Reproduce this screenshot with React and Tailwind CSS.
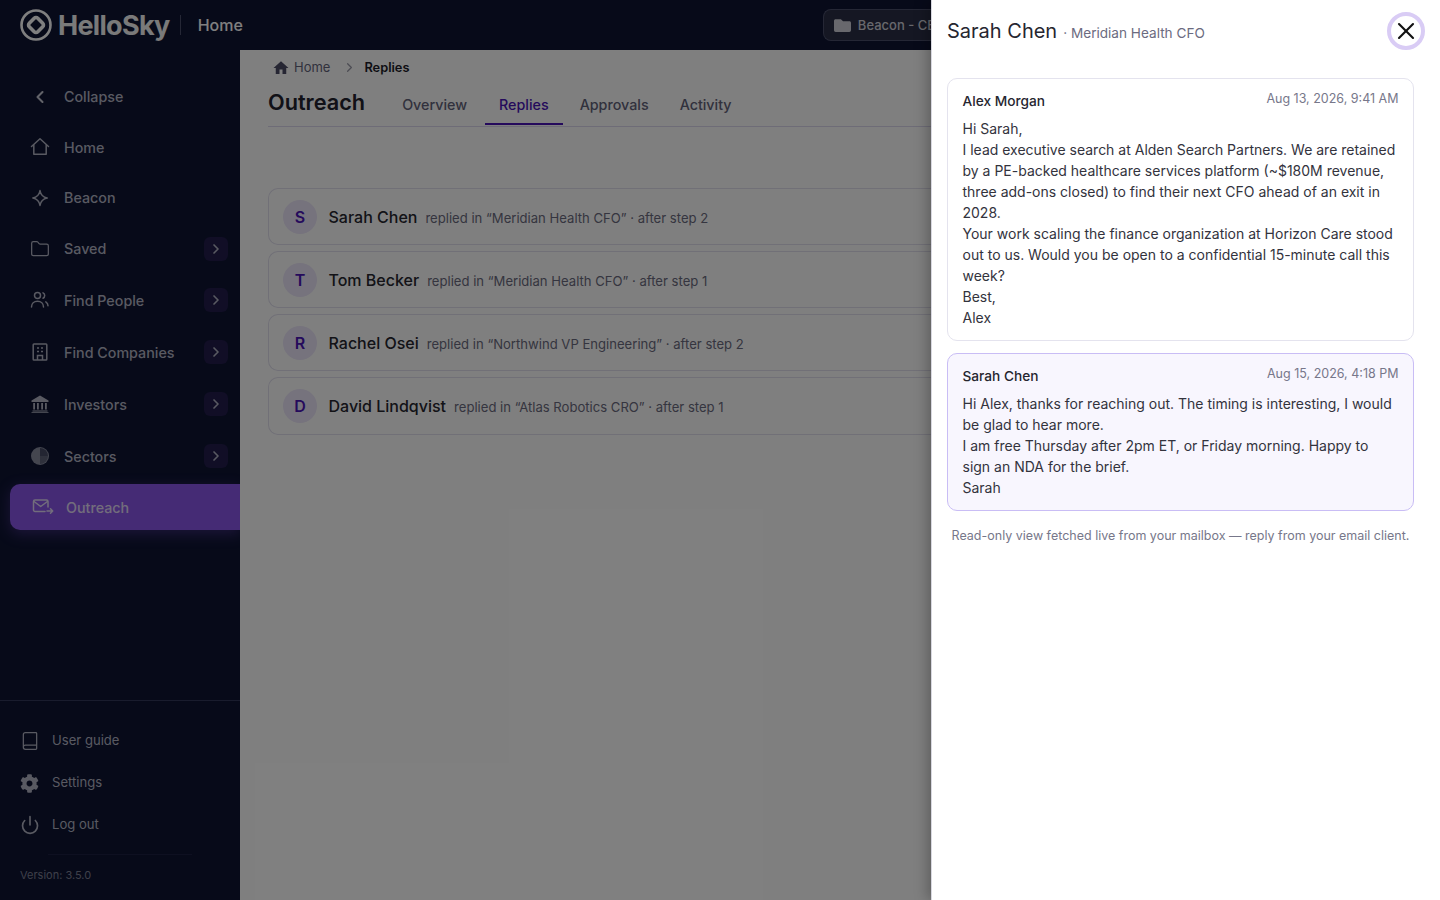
import { Book, ChevronLeft, ChevronRight, Folder, Power, X } from "lucide-react";
import { FaCog, FaFolder } from "react-icons/fa";
import { MdHome } from "react-icons/md";

const font = { fontFamily: "Inter, 'Noto Sans', sans-serif" };

function HomeIcon() {
  return (
    <svg width="20" height="20" viewBox="0 0 20 20" fill="none" stroke="currentColor" strokeWidth="1.500" strokeLinejoin="round" strokeLinecap="round">
      <path d="M1.500 9.500L10 1.800l8.500 7.700" />
      <path d="M3.800 8v9.200h12.400V8" />
    </svg>
  );
}

function Sparkle() {
  return (
    <svg width="20" height="20" viewBox="0 0 20 20" fill="none" stroke="currentColor" strokeWidth="1.500" strokeLinejoin="round">
      <path d="M10 2.500c.7 4.400 2.700 6.700 7.200 7.500-4.500.8-6.500 3.100-7.200 7.500-.7-4.400-2.700-6.700-7.200-7.500 4.500-.8 6.500-3.100 7.200-7.500z" />
    </svg>
  );
}

function PeopleIcon() {
  return (
    <svg width="20" height="20" viewBox="0 0 20 20" fill="none" stroke="currentColor" strokeWidth="1.500" strokeLinecap="round">
      <circle cx="7.500" cy="5.500" r="3" />
      <path d="M1.500 17c0-3.600 2.600-5.800 6-5.800s6 2.200 6 5.800" />
      <path d="M13 2.800a3 3 0 0 1 0 5.400" />
      <path d="M15.800 11.800c1.300.8 2.200 2.300 2.200 4" />
    </svg>
  );
}

function CompanyIcon() {
  return (
    <svg width="20" height="20" viewBox="0 0 20 20" fill="none" stroke="currentColor" strokeWidth="1.500">
      <rect x="3.200" y="2" width="13.600" height="16" rx="0.800" />
      <path d="M7 6h2M11 6h2M7 9.500h2M11 9.500h2M7.500 18v-4.500h5V18" />
    </svg>
  );
}

function BankIcon() {
  return (
    <svg width="20" height="20" viewBox="0 0 20 20" fill="currentColor">
      <path d="M10 1.500L18.500 6.500V8H1.500V6.500z" />
      <path d="M3.200 9h1.800v6.500H3.200zM7 9h1.800v6.500H7zM11.200 9H13v6.500h-1.800zM15 9h1.800v6.500H15z" />
      <path d="M2.500 16.500h15v1h-15zM1.500 18h17v.8h-17z" />
    </svg>
  );
}

function SectorsIcon() {
  return (
    <svg width="20" height="20" viewBox="0 0 20 20">
      <circle cx="10" cy="10" r="9" fill="currentColor" opacity="0.75" />
      <path d="M10 2a8 8 0 0 1 8 8h-8z" fill="#0e1433" opacity="0.55" />
      <path d="M10 10h8a8 8 0 0 1-8 8z" fill="#0e1433" opacity="0.35" />
    </svg>
  );
}

function MailSend() {
  return (
    <svg width="22" height="16" viewBox="0 0 22 16" fill="none" stroke="currentColor" strokeWidth="1.500" strokeLinecap="round" strokeLinejoin="round">
      <path d="M13 12.500H3a1.500 1.500 0 0 1-1.500-1.500V2.500A1.500 1.500 0 0 1 3 1h11.500A1.500 1.500 0 0 1 16 2.500V8" />
      <path d="M2 2.500l6.700 5 6.700-5" />
      <path d="M15 12h5.500M18.500 9.800l2.200 2.200-2.200 2.200" />
    </svg>
  );
}

function HelloSkyLogo() {
  return (
    <svg width="32" height="32" viewBox="0 0 32 32" fill="none" stroke="currentColor">
      <circle cx="16" cy="16" r="14.500" strokeWidth="2.600" />
      <rect x="10" y="10" width="12" height="12" rx="2.500" transform="rotate(45 16 16)" strokeWidth="3.600" />
    </svg>
  );
}

const navItems = [
  { label: "Home", icon: <HomeIcon />, height: "h-[50px]" },
  { label: "Beacon", icon: <Sparkle />, height: "h-[51px]" },
  { label: "Saved", icon: <Folder size={20} strokeWidth={1.500} />, height: "h-[51px]", more: true },
  { label: "Find People", icon: <PeopleIcon />, height: "h-[52px]", more: true },
  { label: "Find Companies", icon: <CompanyIcon />, height: "h-[52px]", more: true },
  { label: "Investors", icon: <BankIcon />, height: "h-[52px]", more: true },
  { label: "Sectors", icon: <SectorsIcon />, height: "h-[52px]", more: true },
];

const replies = [
  { name: "Sarah Chen", campaign: "Meridian Health CFO", step: 2 },
  { name: "Tom Becker", campaign: "Meridian Health CFO", step: 1 },
  { name: "Rachel Osei", campaign: "Northwind VP Engineering", step: 2 },
  { name: "David Lindqvist", campaign: "Atlas Robotics CRO", step: 1 },
];

function Sidebar() {
  return (
    <aside className="flex w-[240px] shrink-0 flex-col bg-[#0e1433] text-[#b3b5c4]">
      <div className="flex-1 pt-[21px]">
        <div className="flex h-[51px] items-center pl-[30px] text-[14.300px] font-medium">
          <span className="flex w-[20px] justify-center text-[#c4c6d2]"><ChevronLeft size={24} strokeWidth={2.500} /></span>
          <span className="ml-[14px]">Collapse</span>
        </div>
        {navItems.map((item) => (
          <div key={item.label} className={`flex ${item.height} items-center pl-[30px] pr-[12px] text-[14.300px] font-medium`}>
            <span className="flex w-[20px] justify-center">{item.icon}</span>
            <span className="ml-[14px] flex-1 pt-[1px]">{item.label}</span>
            {item.more && (
              <span className="flex h-[24px] w-[24px] items-center justify-center rounded-md bg-[#221c4c]">
                <ChevronRight size={16} strokeWidth={2.500} />
              </span>
            )}
          </div>
        ))}
        <div className="mt-[2px] ml-[10px] flex h-[46px] items-center rounded-l-[10px] bg-[#8a56ea] pl-[22px] text-[14.300px] font-medium text-[#e4daf8] shadow-[0_4px_14px_rgba(138,86,234,0.35)]">
          <MailSend />
          <span className="ml-[12px] pt-[1px]">Outreach</span>
        </div>
      </div>
      <div className="h-[200px] border-t border-[#33385a] pt-[19px] text-[13.100px]">
        <div className="flex h-[42px] items-center pl-[20px]">
          <Book size={20} strokeWidth={1.500} />
          <span className="ml-[12px]">User guide</span>
        </div>
        <div className="flex h-[42px] items-center pl-[20px]">
          <FaCog size={19} />
          <span className="ml-[13px]">Settings</span>
        </div>
        <div className="flex h-[42px] items-center pl-[20px]">
          <Power size={20} strokeWidth={2} />
          <span className="ml-[12px]">Log out</span>
        </div>
        <div className="mx-[48px] mt-[8px] border-t border-[#1c2142]" />
        <p className="mt-[12px] pl-[20px] text-[11px] text-[#7d8095]">Version: 3.5.0</p>
      </div>
    </aside>
  );
}

function Workspace() {
  return (
    <main className="flex-1 bg-white pl-[28px]">
      <div className="flex h-[35px] items-center pl-[4px] text-[13px]">
        <MdHome size={18} className="text-[#4c4c66]" />
        <span className="ml-[4px] text-[#63637a]">Home</span>
        <ChevronRight size={15} className="ml-[12px] mr-[7px] text-[#9a9aa8]" />
        <span className="text-[12.800px] font-semibold text-[#1c1c28]">Replies</span>
      </div>
      <div className="flex h-[42px] items-start border-b border-[#ddd9ee]">
        <h1 className="mt-[2px] text-[21.700px] font-semibold leading-[30px] text-[#22222e]">Outreach</h1>
        <nav className="ml-[37px] flex text-[14.300px] font-medium text-[#63637a]">
          <span className="flex h-[40px] items-center">Overview</span>
          <span className="ml-[18px] flex h-[40px] items-center border-b-2 border-[#4a14b8] px-[14px] pt-[2px] text-[#4a14b8]">Replies</span>
          <span className="ml-[17px] flex h-[40px] items-center">Approvals</span>
          <span className="ml-[31px] flex h-[40px] items-center">Activity</span>
        </nav>
      </div>
      <div className="mt-[61px] flex flex-col gap-[6px]">
        {replies.map((reply) => (
          <div key={reply.name} className="flex h-[57px] items-center rounded-l-[10px] border border-r-0 border-[#e2e0ee] pl-[14px] last:h-[58px]">
            <span className="flex h-[34px] w-[34px] items-center justify-center rounded-full bg-[#ece6fa] text-[16px] font-semibold text-[#4a14b8]">
              {reply.name[0]}
            </span>
            <div className="ml-[11.500px] flex items-baseline">
              <span className="text-[16px] font-medium text-[#26262f]">{reply.name}</span>
              <span className="ml-[8px] text-[13.100px] text-[#6b6b80]">
                replied in “{reply.campaign}” · after step {reply.step}
              </span>
            </div>
          </div>
        ))}
      </div>
    </main>
  );
}

function MessageCard({ name, date, lines, highlighted }) {
  return (
    <div className={`rounded-[10px] border px-[14.500px] pt-[11px] pb-[12px] ${highlighted ? "border-[#c9bdf5] bg-[#f8f6fe]" : "border-[#e4e3ee] bg-white"}`}>
      <div className="flex h-[21px] items-center justify-between">
        <span className="pt-[1px] text-[13.700px] font-medium leading-[21px] text-[#26262f]">{name}</span>
        <span className="-mt-[2px] text-[12.500px] text-[#77778a]">{date}</span>
      </div>
      <div className="mt-[7px] text-[14px] leading-[21px] text-[#33333d]">
        {lines.map((line) => (
          <p key={line}>{line}</p>
        ))}
      </div>
    </div>
  );
}

function ThreadPanel() {
  return (
    <div className="absolute inset-y-0 right-0 w-[509px] border-l border-[#d8d8e0] bg-white pl-[15px] pr-[26px] shadow-[-4px_0_12px_rgba(0,0,0,0.25)]">
      <div className="flex h-[78px] items-start justify-between">
        <div className="mt-[16px] flex items-baseline">
          <span className="text-[20px] text-[#26262f]">Sarah Chen</span>
          <span className="ml-[6px] text-[13.600px] text-[#6b6b80]">· Meridian Health CFO</span>
        </div>
        <button className="-mr-[11px] mt-[12px] flex h-[38px] w-[38px] items-center justify-center rounded-full border-[4px] border-[#d9ccf5] text-[#111]">
          <X size={28} strokeWidth={1.800} />
        </button>
      </div>
      <div className="flex flex-col gap-[12px]">
        <MessageCard
          name="Alex Morgan"
          date="Aug 13, 2026, 9:41 AM"
          lines={[
            "Hi Sarah,",
            "I lead executive search at Alden Search Partners. We are retained by a PE-backed healthcare services platform (~$180M revenue, three add-ons closed) to find their next CFO ahead of an exit in 2028.",
            "Your work scaling the finance organization at Horizon Care stood out to us. Would you be open to a confidential 15-minute call this week?",
            "Best,",
            "Alex",
          ]}
        />
        <MessageCard
          highlighted
          name="Sarah Chen"
          date="Aug 15, 2026, 4:18 PM"
          lines={[
            "Hi Alex, thanks for reaching out. The timing is interesting, I would be glad to hear more.",
            "I am free Thursday after 2pm ET, or Friday morning. Happy to sign an NDA for the brief.",
            "Sarah",
          ]}
        />
      </div>
      <p className="mt-[16px] text-center text-[12.500px] text-[#77778a]">
        Read-only view fetched live from your mailbox — reply from your email client.
      </p>
    </div>
  );
}

export default function App() {
  return (
    <div className="relative flex h-[900px] w-[1440px] flex-col overflow-hidden" style={font}>
      <header className="flex h-[50px] shrink-0 items-center bg-[#0e1433] pl-[20px] text-white">
        <span className="text-[#fff]"><HelloSkyLogo /></span>
        <span className="ml-[6px] text-[27px] font-bold leading-none tracking-[-0.700px] text-[#f4f4f4]">HelloSky</span>
        <span className="ml-[10px] h-[20px] border-l border-[#4a4e6a]" />
        <span className="ml-[17px] text-[16px] font-medium">Home</span>
        <div className="ml-[580px] flex h-[32px] w-[108px] shrink-0 items-center rounded-l-lg border border-r-0 border-[#4a4e6a] bg-[#2a2e46] pl-[10px] text-[13px] font-medium text-[#d0d1da]">
          <FaFolder size={17} className="shrink-0" />
          <span className="ml-[7px] min-w-0 overflow-hidden whitespace-nowrap pt-[1px]">Beacon - CEO search</span>
        </div>
      </header>
      <div className="flex flex-1">
        <Sidebar />
        <Workspace />
      </div>
      <div className="absolute inset-0 bg-black/50" />
      <ThreadPanel />
    </div>
  );
}
